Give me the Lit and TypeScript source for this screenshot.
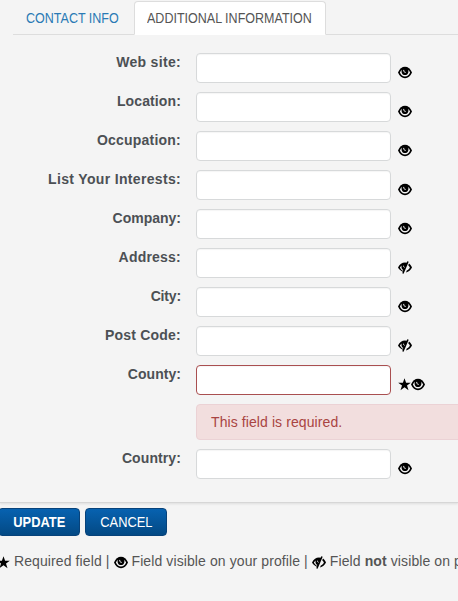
import { LitElement, html, css, svg, nothing } from "lit";
import { customElement, property } from "lit/decorators.js";

type IconName = "eye" | "hidden" | "star";

const shapes = {
  eye: svg`<path fill="#000" d="M0 6.500C1.600 2.500 4 .7 7 .7s5.400 1.800 7 5.800c-1.600 3.900-4 5.700-7 5.700S1.600 10.400 0 6.500Z"/>
    <path fill="#f4f4f4" d="M1.900 6.500c.5-1.200 1.100-2.100 1.900-2.700-.7 2.900.5 5.300 3.200 5.300s3.900-2.400 3.200-5.300c.8.6 1.400 1.500 1.900 2.700-1.100 2.600-2.800 4-5.100 4S3 9.100 1.900 6.500Z"/>
    <path fill="none" stroke="#f4f4f4" stroke-width="1" stroke-linecap="round" d="M5.700 4.300c-.1 1.300.5 2 1.600 2.100"/>`,
  hidden: svg`<path fill="#000" d="M0 6.500C1.700 3 4.100 1.500 7 1.500l1.600.2.700-1.500 1.400.6-5.100 12-1.400-.6.700-1.500C2.800 10 1.200 8.600 0 6.500Z"/>
    <path fill="#f4f4f4" d="M1.900 6.500c.5-.9 1-1.600 1.700-2.100-.4 2 .1 3.500 1.700 4.500l-.4.900c-1.400-.8-2.300-1.900-3-3.300Z"/>
    <path fill="none" stroke="#f4f4f4" stroke-width=".9" d="M5.500 4.700c0 1.100.3 1.600 1.100 1.700"/>
    <path fill="#000" d="M11 2.500c1.300.9 2.300 2.400 3 4-1.300 2.700-3.300 4.400-6 4.900l.8-1.900c1.500-.7 2.500-1.600 3.100-3-.5-1-1-1.700-1.700-2.200Z"/>`,
  star: svg`<path fill="#000" d="m6.500.2 1.600 4.500h4.700L9 7.500l1.500 4.700-4-2.900-4 2.900L4 7.500.2 4.700h4.700Z"/>`,
};

@customElement("field-icon")
class FieldIcon extends LitElement {
  static styles = css`
    :host { display: inline-block; width: 13px; height: 13px; flex: none; }
    svg { display: block; width: 100%; height: 100%; }
  `;
  @property() name: IconName = "eye";
  render() {
    return html`<svg viewBox=${this.name === "star" ? "0 0 13 13" : "0 0 14 13"} preserveAspectRatio="none">${shapes[this.name]}</svg>`;
  }
}

interface Field { label: string; icons: IconName[]; tracking: number; error?: string; }

const fields: Field[] = [
  { label: "Web site:", icons: ["eye"], tracking: 0.32 },
  { label: "Location:", icons: ["eye"], tracking: 0.12 },
  { label: "Occupation:", icons: ["eye"], tracking: 0.22 },
  { label: "List Your Interests:", icons: ["eye"], tracking: 0.33 },
  { label: "Company:", icons: ["eye"], tracking: 0 },
  { label: "Address:", icons: ["hidden"], tracking: 0.22 },
  { label: "City:", icons: ["eye"], tracking: -0.15 },
  { label: "Post Code:", icons: ["hidden"], tracking: 0.22 },
  { label: "County:", icons: ["star", "eye"], tracking: 0.05, error: "This field is required." },
  { label: "Country:", icons: ["eye"], tracking: 0.1 },
];

@customElement("app-root")
class AppRoot extends LitElement {
  static styles = css`
    :host {
      display: block; width: 458px; height: 601px; overflow: hidden;
      background: #f4f4f4; color: #555;
      font: 14px/20px "Liberation Sans", Arial, sans-serif;
    }
    * { box-sizing: border-box; }
    .card { height: 503px; border-bottom: 1px solid #d6d6d6; box-shadow: 0 1px 2px #ddd; }
    .tabs { display: flex; margin-left: 13px; height: 35px; padding-top: 1px; border-bottom: 1px solid #ddd; }
    .tab { height: 34px; padding: 7px 0 0 13px; width: 121px; white-space: nowrap; color: #2a7ab5; }
    .tab.active { width: 192px; padding: 6px 0 0 12px; color: #555; background: #fff; border: 1px solid #ddd; border-bottom-color: #fff; border-radius: 4px 4px 0 0; }
    .narrow { display: inline-block; transform: scaleX(.894); transform-origin: left; }
    .fields { padding-top: 18px; }
    .row { display: flex; height: 30px; margin-bottom: 9px; }
    .label { width: 181px; margin-right: 15px; text-align: right; font-weight: bold; margin-top: -1px; color: #4c5054; }
    input { width: 195px; height: 30px; margin: 0; border: 1px solid #d7d9da; border-radius: 4px; background: #fff; outline: none; font: inherit; padding: 4px 8px; box-shadow: inset 0 1px 1px #0000000a; }
    .invalid { border-color: #a94f50; }
    .icons { display: flex; margin: 13px 0 0 7px; }
    .icons field-icon:last-child { width: 14px; }
    .alert { margin: 0 0 9px 196px; width: 280px; height: 36px; padding: 7px 14px; color: #a94442; background: #f2dede; border: 1px solid #ebd2d5; border-radius: 4px; letter-spacing: .09px; }
    .buttons { display: flex; gap: 5px; padding-top: 5px; }
    button { height: 28px; padding: 0; border: 1px solid #07427a; border-radius: 4px; color: #fff; font: 14px/20px "Liberation Sans", Arial, sans-serif; background: linear-gradient(#0762b0, #034984); width: 82px; white-space: nowrap; }
    button .narrow { transform-origin: center; transform: scaleX(.92); }
    .primary { width: 82px; margin-left: -2px; font-weight: bold; }
    .legend { display: flex; align-items: center; margin: 15px 0 0 -3px; white-space: pre; letter-spacing: .1px; }
    .legend field-icon { margin-top: 2px; width: 14px; }
    .legend field-icon[name="star"] { width: 13px; }
  `;

  render() {
    return html`
      <div class="card">
        <div class="tabs"><div class="tab"><span class="narrow">CONTACT INFO</span></div><div class="tab active"><span class="narrow">ADDITIONAL INFORMATION</span></div></div>
        <div class="fields">
          ${fields.map((f) => html`
            <div class="row">
              <label class="label" style="letter-spacing: ${f.tracking}px">${f.label}</label>
              <input class=${f.error ? "invalid" : ""} aria-label=${f.label} />
              <span class="icons">${f.icons.map((i) => html`<field-icon name=${i}></field-icon>`)}</span>
            </div>
            ${f.error ? html`<div class="alert">${f.error}</div>` : nothing}`)}
        </div>
      </div>
      <div class="buttons"><button class="primary"><span class="narrow">UPDATE</span></button><button><span class="narrow">CANCEL</span></button></div>
      <div class="legend"><field-icon name="star"></field-icon><span> Required field | </span><field-icon name="eye"></field-icon><span> Field visible on your profile | </span><field-icon name="hidden"></field-icon><span> Field <b>not</b> visible on profile</span></div>
    `;
  }
}
